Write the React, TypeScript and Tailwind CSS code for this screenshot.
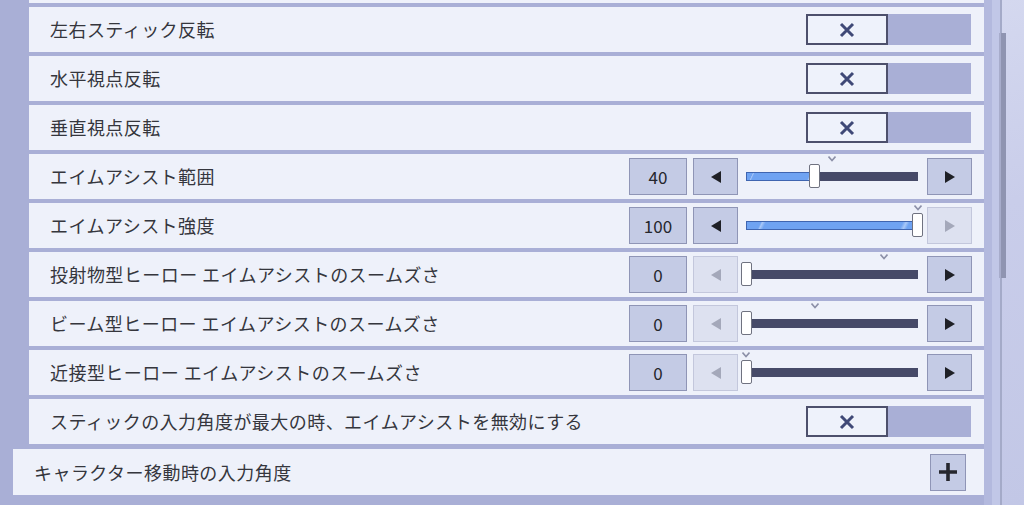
import React from "react";

type Row =
  | { kind: "toggle"; label: string }
  | { kind: "slider"; label: string; value: number; max: number; mark: number };

const rows: Row[] = [
  { kind: "toggle", label: "左右スティック反転" },
  { kind: "toggle", label: "水平視点反転" },
  { kind: "toggle", label: "垂直視点反転" },
  { kind: "slider", label: "エイムアシスト範囲", value: 40, max: 100, mark: 50 },
  { kind: "slider", label: "エイムアシスト強度", value: 100, max: 100, mark: 100 },
  { kind: "slider", label: "投射物型ヒーロー エイムアシストのスームズさ", value: 0, max: 100, mark: 80 },
  { kind: "slider", label: "ビーム型ヒーロー エイムアシストのスームズさ", value: 0, max: 100, mark: 40 },
  { kind: "slider", label: "近接型ヒーロー エイムアシストのスームズさ", value: 0, max: 100, mark: 0 },
  { kind: "toggle", label: "スティックの入力角度が最大の時、エイムアシストを無効にする" },
];

const font = { fontFamily: '"Noto Sans CJK JP", "Noto Sans", sans-serif' };

function Toggle() {
  return (
    <div className="flex h-[31px]">
      <div className="flex w-[82px] items-center justify-center border-2 border-[#4d506c] bg-[#eef2fb]">
        <svg width="16" height="16" viewBox="0 0 16 16">
          <path d="M2 2 L14 14 M14 2 L2 14" stroke="#3f4977" strokeWidth="3" strokeLinecap="butt" />
        </svg>
      </div>
      <div className="w-[83px] bg-[#a9afd6]" />
    </div>
  );
}

function ArrowBtn({ dir, disabled }: { dir: "l" | "r"; disabled: boolean }) {
  return (
    <div
      className={
        disabled
          ? "flex h-[37px] w-[45px] items-center justify-center border border-[#c3c7dc] bg-[#dde1f0]"
          : "flex h-[37px] w-[45px] items-center justify-center border border-[#8f95b6] bg-[#c4cbe5]"
      }
    >
      <svg width="12" height="14" viewBox="0 0 12 14">
        <path
          d={dir === "l" ? "M11 1 L1 7 L11 13 Z" : "M1 1 L11 7 L1 13 Z"}
          fill={disabled ? "#a4a8ba" : "#1f2026"}
        />
      </svg>
    </div>
  );
}

function Slider({ value, max, mark }: { value: number; max: number; mark: number }) {
  const w = 172;
  const pos = (value / max) * w;
  const markPos = (mark / 100) * w;
  return (
    <div className="flex items-center">
      <div className="flex h-[37px] w-[58px] items-center justify-center border border-[#8f95b6] bg-[#c4cbe5] text-[17px] tracking-normal text-[#25262c]">
        {value}
      </div>
      <div className="ml-[6px]">
        <ArrowBtn dir="l" disabled={value <= 0} />
      </div>
      <div className="relative ml-[8px] mr-[9px] h-[37px] w-[172px]">
        <div className="absolute left-0 top-[14px] h-[9px] w-[172px] bg-[#464a68]" />
        {pos > 0 && (
          <div
            className="absolute left-0 top-[14px] h-[9px] border border-[#3f65b0] bg-[linear-gradient(115deg,#6fa3f2_0%,#6fa3f2_8%,#a9c8f8_9%,#6fa3f2_11%,#6fa3f2_90%,#a9c8f8_92%,#6fa3f2_94%)]"
            style={{ width: pos }}
          />
        )}
        <svg
          className="absolute top-[-2px]"
          style={{ left: markPos - 4 }}
          width="8"
          height="6"
          viewBox="0 0 8 6"
        >
          <path d="M0.5 0.5 L4 4.5 L7.5 0.5" stroke="#8c90a8" strokeWidth="1.6" fill="none" />
        </svg>
        <div
          className="absolute top-[6px] h-[24px] w-[11px] rounded-[2px] border border-[#6f7280] bg-white"
          style={{ left: Math.min(Math.max(pos - 5.5, -5), w - 6) }}
        />
      </div>
      <ArrowBtn dir="r" disabled={value >= max} />
    </div>
  );
}

export default function App() {
  return (
    <div className="flex h-[505px] w-[1024px] overflow-hidden bg-[#a9afd6]" style={font}>
      <div className="flex w-[984px] flex-col">
        <div className="ml-[29px] h-[3px] bg-[#eef1fa]" />
        <div className="mt-[4px] flex flex-col gap-[4px]">
          {rows.map((r, i) => (
            <div
              key={i}
              className="ml-[29px] flex h-[45px] items-center justify-between bg-[#eef1fa] pl-[21px] pr-[12px] text-[18px] text-[#35363d]"
            >
              <span className="tracking-[0.45px]">{r.label}</span>
              {r.kind === "toggle" ? (
                <div className="mr-[1px]">
                  <Toggle />
                </div>
              ) : (
                <Slider value={r.value} max={r.max} mark={r.mark} />
              )}
            </div>
          ))}
        </div>
        <div className="ml-[13px] mt-[5px] flex h-[46px] items-center justify-between bg-[#eef1fa] pl-[21px] pr-[18px] text-[18px] text-[#35363d]">
          <span className="tracking-[0.45px]">キャラクター移動時の入力角度</span>
          <div className="flex h-[37px] w-[36px] items-center justify-center border border-[#8f95b6] bg-[#c4cbe5]">
            <svg width="20" height="20" viewBox="0 0 20 20">
              <path d="M10 1 V19 M1 10 H19" stroke="#26272e" strokeWidth="3.6" />
            </svg>
          </div>
        </div>
      </div>
      <div className="relative flex w-[40px]">
        <div className="w-[8px] bg-[#b3b9de]" />
        <div className="w-[8px] bg-[#c1c7e7]" />
        <div className="w-[2px] bg-[#a4aac8]" />
        <div className="flex-1 bg-[linear-gradient(160deg,#d4d8ef_0%,#c9cdea_40%,#c2c7e6_100%)]" />
        <div className="absolute left-[15px] top-[33px] h-[245px] w-[7px] border-l-2 border-[#a7accb] bg-[#8f94b1]" />
      </div>
    </div>
  );
}
